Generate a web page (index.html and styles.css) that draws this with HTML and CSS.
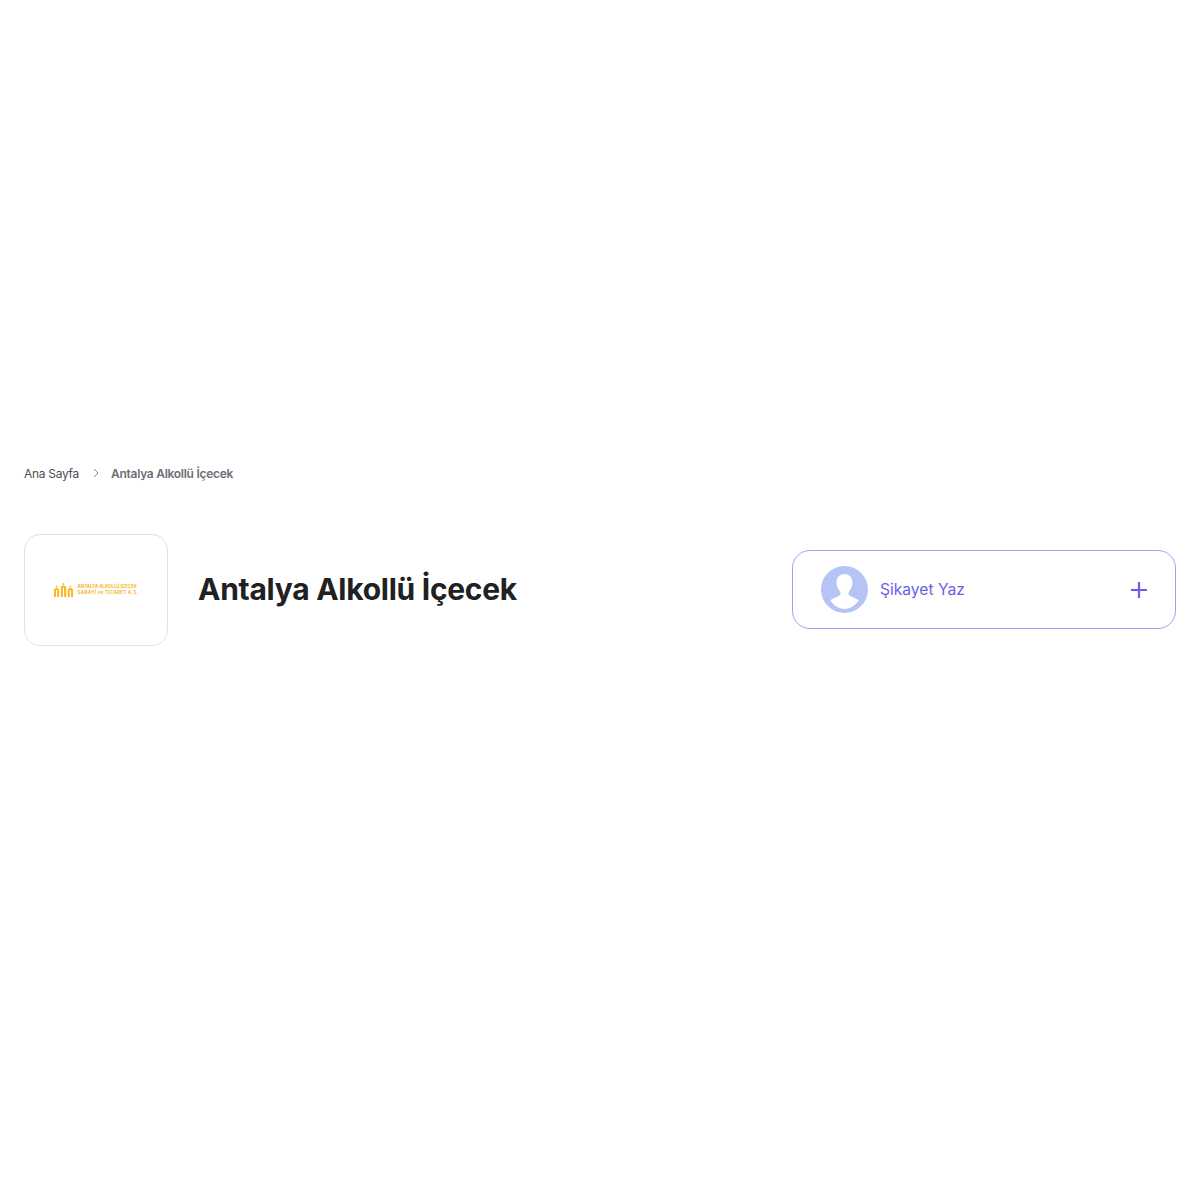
FILE: index.html
```html
<!DOCTYPE html>
<html lang="tr">
<head>
<meta charset="utf-8">
<title>Antalya Alkollü İçecek</title>
<link rel="stylesheet" href="styles.css">
</head>
<body>
<main class="page">
  <nav class="crumbs">
    <a class="crumb-home">Ana Sayfa</a>
    <svg class="crumb-sep" width="6" height="10" viewBox="0 0 6 10"><path d="M1 1l4 4-4 4" fill="none" stroke="#8a8a92" stroke-width="1"/></svg>
    <span class="crumb-current">Antalya Alkollü İçecek</span>
  </nav>
  <section class="head">
    <div class="brand">
      <div class="logo-card">
        <div class="logo">
          <svg class="logo-mark" width="19" height="14" viewBox="0 0 19 14"><g fill="none" stroke="#fbb41a" stroke-width="2"><path d="M1 14V7.500a1.600 1.600 0 0 1 3.200 0V14"/><path d="M7.900 14V5a1.600 1.600 0 0 1 3.200 0V14"/><path d="M14.800 14V7.500a1.600 1.600 0 0 1 3.200 0V14"/></g><g fill="#fbb41a"><circle cx="2.600" cy="3.400" r="1"/><circle cx="9.500" cy="1" r="1"/><circle cx="16.400" cy="3.400" r="1"/></g></svg>
          <div class="logo-text"><span>ANTALYA ALKOLLÜ İÇECEK</span><span class="logo-line2">SANAYİ ve TİCARET A.Ş.</span></div>
        </div>
      </div>
      <h1 class="title">Antalya Alkollü İçecek</h1>
    </div>
    <a class="write">
      <span class="avatar">
        <svg width="47" height="47" viewBox="0 0 47 47"><circle cx="23.500" cy="23.500" r="23.500" fill="#b5c4f5"/><path d="M23.500 8c-5 0-8 3.600-8 8.300 0 3.700 1.400 7 3.500 9.200.7.800.7 2.900-.3 3.800-1.500 1.300-6.200 2.700-9.500 5C13 39.800 18 43 23.500 43s10.500-3.200 14.300-8.700c-3.300-2.300-8-3.700-9.500-5-1-.9-1-3-.3-3.800 2.100-2.200 3.500-5.500 3.500-9.200C31.500 11.600 28.500 8 23.500 8z" fill="#fff"/></svg>
      </span>
      <span class="write-label">Şikayet Yaz</span>
      <svg class="plus" width="16" height="16" viewBox="0 0 16 16"><path d="M8 0v16M0 8h16" stroke="#6a5ee8" stroke-width="2.200" fill="none"/></svg>
    </a>
  </section>
</main>
</body>
</html>
```
FILE: styles.css
```css
* { box-sizing: border-box; }
html, body { margin: 0; background: #fff; }
body { font-family: Inter, "Liberation Sans", sans-serif; }
.page { padding: 464px 24px 0; }
.crumbs { display: flex; align-items: center; height: 18px; font-size: 12px; letter-spacing: -0.3px; }
.crumb-home { color: #4d4d55; width: 69px; }
.crumb-sep { margin-right: 12px; }
.crumb-current { color: #6d6d75; font-weight: 600; letter-spacing: -0.27px; }
.head { display: flex; align-items: flex-start; justify-content: space-between; margin-top: 52px; }
.brand { display: flex; align-items: center; gap: 30px; }
.logo-card { width: 144px; height: 112px; border: 1px solid #e2e2e4; border-radius: 16px; display: flex; align-items: center; justify-content: center; }
.logo { display: flex; align-items: center; gap: 5px; }
.logo-mark { display: block; }
.logo-text { display: flex; flex-direction: column; gap: 2px; font-size: 4.400px; line-height: 4px; font-weight: 700; color: #fbb41a; white-space: nowrap; }
.logo-line2 { letter-spacing: 0.35px; }
.title { margin: 0 0 2px; font-size: 30px; line-height: 36px; font-weight: 700; color: #212121; letter-spacing: -0.27px; }
.write { width: 384px; height: 79px; margin-top: 16px; border: 1px solid #9da2f6; border-radius: 18px; padding: 0 28px; display: flex; align-items: center; }
.avatar { display: block; width: 47px; height: 47px; }
.avatar svg { display: block; }
.write-label { margin-left: 12px; flex: 1; font-size: 15.600px; color: #6a5ee8; }
.plus { display: block; }
```
